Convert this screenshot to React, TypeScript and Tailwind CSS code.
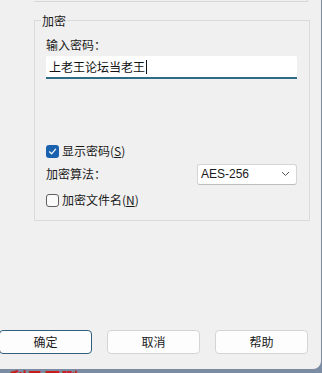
import React from "react";

const font = { fontFamily: '"Segoe UI", "Noto Sans CJK SC", "Noto Sans", sans-serif' };

function CheckBox({ checked }: { checked: boolean }) {
  return checked ? (
    <span className="flex h-[13px] w-[13px] items-center justify-center rounded-[3px] bg-[#1a62b0]">
      <svg width="9" height="9" viewBox="0 0 9 9" fill="none">
        <path d="M1.5 4.8 L3.6 6.8 L7.6 2.2" stroke="white" strokeWidth="1.2" strokeLinecap="round" strokeLinejoin="round" />
      </svg>
    </span>
  ) : (
    <span className="h-[13px] w-[13px] rounded-[3px] border border-[#5f5f5f] bg-[#fafafa]" />
  );
}

function Btn({ label, primary }: { label: string; primary?: boolean }) {
  return (
    <div
      className={
        "flex h-[24px] w-[93px] items-center justify-center rounded-[4px] bg-[#fdfdfd] text-[12px] text-[#1a1a1a] " +
        (primary ? "border border-[#2f5f7a]" : "border border-[#d4d4d4]")
      }
    >
      {label}
    </div>
  );
}

export default function App() {
  return (
    <div className="h-[373px] w-[322px] overflow-hidden bg-[#7c8ca2]" style={font}>
      <div className="flex h-[369px] w-[321px] flex-col rounded-br-[8px] bg-[#f0f0f0]">
        <div className="ml-[34px] h-[2px] w-[274px] border-b border-r border-[#d8d8d8]" />
        <fieldset className="ml-[34px] mt-[11px] h-[208px] w-[276px] border border-[#dadada] p-0">
          <legend className="ml-[6px] px-[1px] text-[12px] leading-[15px] text-[#1a1a1a]">加密</legend>
          <div className="flex flex-col pl-[11px] pr-[12px] pt-[9px]">
            <div className="h-[16px] text-[12px] leading-[16px] text-[#1a1a1a]">输入密码：</div>
            <div className="mt-[3px] flex h-[23px] items-center rounded-t-[2px] border-b-2 border-[#2e6c86] bg-white pl-[3px] text-[12px] text-[#111]">
              上老王论坛当老王<span className="ml-[1px] inline-block h-[14px] w-[1px] bg-[#111]" />
            </div>
            <div className="mt-[64px] flex h-[16px] items-center gap-[3px] text-[12px] text-[#1a1a1a]">
              <CheckBox checked />
              <span>
                显示密码(<span className="underline">S</span>)
              </span>
            </div>
            <div className="mt-[5px] flex h-[20px] items-center justify-between text-[12px] text-[#1a1a1a]">
              <span>加密算法：</span>
              <div className="flex h-[21px] w-[100px] items-center justify-between rounded-[3px] border border-[#d5d5d5] border-b-[#bdbdbd] bg-white pl-[3px] pr-[6px] text-[12px]" style={{ fontFamily: '"Liberation Sans", Arial, sans-serif' }}>
                <span>AES-256</span>
                <svg width="9" height="6" viewBox="0 0 9 6" fill="none">
                  <path d="M1 1 L4.5 4.5 L8 1" stroke="#555" strokeWidth="1" />
                </svg>
              </div>
            </div>
            <div className="mt-[8px] flex h-[16px] items-center gap-[3px] text-[12px] text-[#1a1a1a]">
              <CheckBox checked={false} />
              <span>
                加密文件名(<span className="underline">N</span>)
              </span>
            </div>
          </div>
        </fieldset>
        <div className="flex-1" />
        <div className="mb-[15px] ml-[-1px] flex gap-[15px]">
          <Btn label="确定" primary />
          <Btn label="取消" />
          <Btn label="帮助" />
        </div>
      </div>
      <div className="pl-[10px] text-[17px] font-bold leading-[17px] text-[#c81e1e]">利马王删：</div>
    </div>
  );
}
